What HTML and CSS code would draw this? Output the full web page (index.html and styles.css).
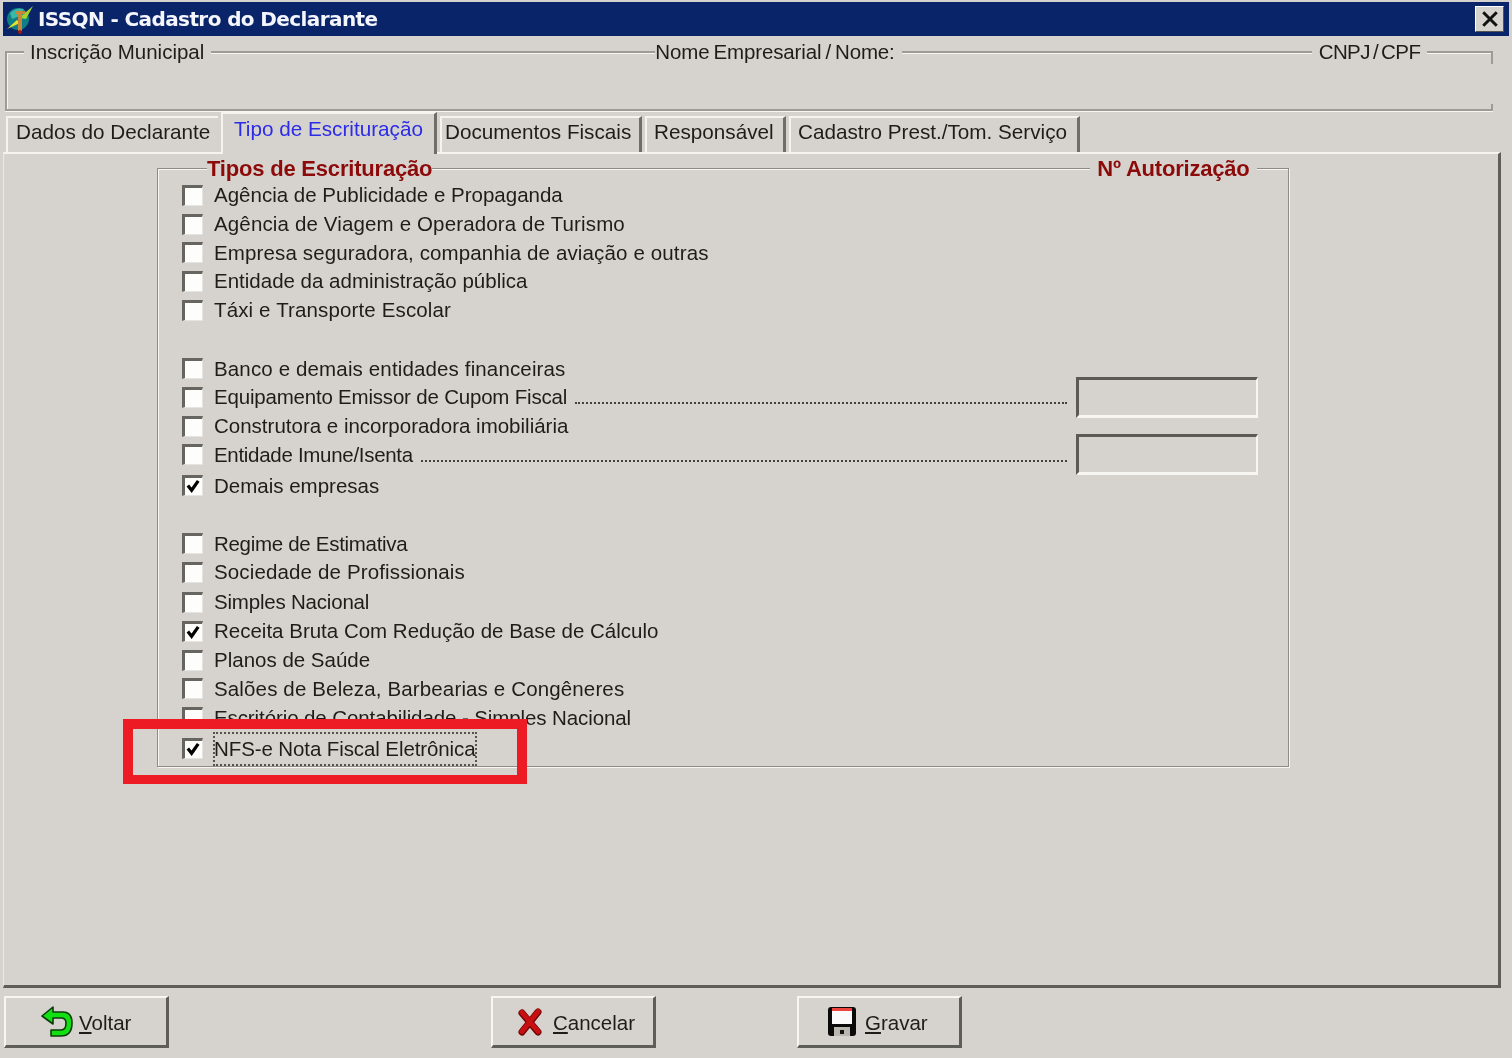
FILE: index.html
```html
<!DOCTYPE html>
<html lang="pt-BR">
<head>
<meta charset="utf-8">
<title>ISSQN - Cadastro do Declarante</title>
<link rel="stylesheet" href="styles.css">
</head>
<body>
<div class="window">
  <header class="titlebar">
    <svg class="app-icon" viewBox="0 0 30 30" aria-hidden="true">
      <circle cx="13" cy="15" r="11" fill="#0f7f86"/>
      <path d="M5 9q6-6 14-4l-4 7-8 3z" fill="#39b8a8"/>
      <path d="M2 25 12 16l3 3z" fill="#e6e22a"/>
      <path d="M14 14 28 2l-7 13z" fill="#9fd62a"/>
      <path d="M11 7h9v3h-3v17h-4V10h-2z" fill="#c8853c"/>
      <circle cx="15" cy="28" r="2" fill="#a01818"/>
    </svg>
    <span class="title-text">ISSQN - Cadastro do Declarante</span>
    <button class="close-btn" aria-label="Fechar">
      <svg viewBox="0 0 16 14" aria-hidden="true"><path d="M2 1 14 13M14 1 2 13" stroke="#111" stroke-width="2.6" fill="none"/></svg>
    </button>
  </header>

  <section class="head-group">
    <div class="legends">
      <span class="legend legend-insc">Inscrição Municipal</span>
      <span class="legend legend-nome">Nome Empresarial / Nome:</span>
      <span class="legend legend-cnpj">CNPJ / CPF</span>
    </div>
  </section>

  <nav class="tabs">
    <span class="tab tab-dados">Dados do Declarante</span>
    <span class="tab tab-active">Tipo de Escrituração</span>
    <span class="tab tab-docs">Documentos Fiscais</span>
    <span class="tab tab-resp">Responsável</span>
    <span class="tab tab-cad">Cadastro Prest./Tom. Serviço</span>
  </nav>

  <main class="panel">
    <section class="types-group">
      <div class="legends">
        <span class="legend red legend-tipos">Tipos de Escrituração</span>
        <span class="legend red legend-aut">Nº Autorização</span>
      </div>
      <div class="rows">
        <div class="row"><i class="check"></i><span class="label">Agência de Publicidade e Propaganda</span></div>
        <div class="row"><i class="check"></i><span class="label sp-wide">Agência de Viagem e Operadora de Turismo</span></div>
        <div class="row"><i class="check"></i><span class="label sp-wide">Empresa seguradora, companhia de aviação e outras</span></div>
        <div class="row"><i class="check"></i><span class="label">Entidade da administração pública</span></div>
        <div class="row"><i class="check"></i><span class="label sp-wide">Táxi e Transporte Escolar</span></div>
      </div>
      <div class="rows block-gap">
        <div class="row"><i class="check"></i><span class="label sp-wide">Banco e demais entidades financeiras</span></div>
        <div class="row"><i class="check"></i><span class="label sp-tight">Equipamento Emissor de Cupom Fiscal</span><span class="leader"></span><span class="sunken"></span></div>
        <div class="row"><i class="check"></i><span class="label">Construtora e incorporadora imobiliária</span></div>
        <div class="row"><i class="check"></i><span class="label sp-tighter">Entidade Imune/Isenta</span><span class="leader"></span><span class="sunken"></span></div>
        <div class="row nudge-2"><i class="check"><svg viewBox="0 0 18 18"><path d="M3 8l4 5 7-10" stroke="#000" stroke-width="3.400" fill="none"/></svg></i><span class="label">Demais empresas</span></div>
      </div>
      <div class="rows block-gap-b">
        <div class="row"><i class="check"></i><span class="label sp-tighter">Regime de Estimativa</span></div>
        <div class="row"><i class="check"></i><span class="label sp-wide">Sociedade de Profissionais</span></div>
        <div class="row nudge-1"><i class="check"></i><span class="label sp-tight">Simples Nacional</span></div>
        <div class="row"><i class="check"><svg viewBox="0 0 18 18"><path d="M3 8l4 5 7-10" stroke="#000" stroke-width="3.400" fill="none"/></svg></i><span class="label">Receita Bruta Com Redução de Base de Cálculo</span></div>
        <div class="row"><i class="check"></i><span class="label">Planos de Saúde</span></div>
        <div class="row"><i class="check"></i><span class="label sp-wide">Salões de Beleza, Barbearias e Congêneres</span></div>
        <div class="row"><i class="check"></i><span class="label sp-slight">Escritório de Contabilidade - Simples Nacional</span></div>
        <div class="row nudge-2"><i class="check"><svg viewBox="0 0 18 18"><path d="M3 8l4 5 7-10" stroke="#000" stroke-width="3.400" fill="none"/></svg></i><span class="label focused sp-slight">NFS-e Nota Fiscal Eletrônica</span></div>
      </div>
    </section>
  </main>

  <footer class="footer">
    <button class="btn btn-voltar">
      <svg class="ico" width="32" height="32" viewBox="0 0 32 32" aria-hidden="true">
        <path d="M1 10 12 1v5h10q9 0 9 11 0 13-11 13H10v-6h10q5 0 5-7 0-5-5-5h-8v6z" fill="#12e012" stroke="#0c3c0c" stroke-width="1.600" stroke-linejoin="round"/>
      </svg>
      <span class="btn-text"><u>V</u>oltar</span>
    </button>
    <button class="btn btn-cancelar">
      <svg class="ico" width="28" height="28" viewBox="0 0 28 28" aria-hidden="true">
        <path d="M6 5 22 24M22 4 6 24" stroke="#6e0608" stroke-width="7" stroke-linecap="round" fill="none"/>
        <path d="M6 4.500 22 23.500M22 3.500 6 23.500" stroke="#c80f12" stroke-width="5" stroke-linecap="round" fill="none"/>
      </svg>
      <span class="btn-text"><u>C</u>ancelar</span>
    </button>
    <button class="btn btn-gravar">
      <svg class="ico" width="30" height="31" viewBox="0 0 30 31" aria-hidden="true">
        <rect x="1" y="1" width="28" height="29" rx="3" fill="#0a0a0a"/>
        <rect x="5" y="2" width="20" height="3" fill="#f0443e"/>
        <rect x="5" y="5" width="20" height="13" fill="#fbfbfb"/>
        <rect x="7" y="21" width="16" height="9" fill="#b9b6b0"/>
        <rect x="13" y="24" width="4" height="4" fill="#111"/>
      </svg>
      <span class="btn-text"><u>G</u>ravar</span>
    </button>
  </footer>

  <div class="annotation"></div>
</div>
</body>
</html>
```

FILE: styles.css
```css
* { box-sizing: border-box; }
html, body { margin: 0; padding: 0; background: #d6d3ce; }
body { width: 1512px; height: 1058px; overflow: hidden; }

.window {
  position: relative;
  width: 1512px;
  height: 1058px;
  padding: 2px 0 0 3px;
  background: #d6d3ce;
  font-family: "Liberation Sans", Arial, sans-serif;
  font-size: 20.5px;
  color: #1f1d19;
  filter: blur(0.55px);
}

/* Title bar */
.titlebar {
  display: flex;
  align-items: center;
  width: 1506px;
  height: 34px;
  padding: 0 5px 0 2px;
  background: #0a246a;
  color: #fff;
}
.app-icon { width: 30px; height: 30px; flex: none; }
.title-text {
  margin-left: 3px;
  font-family: "DejaVu Sans", sans-serif;
  font-weight: 700;
  font-size: 20px;
  letter-spacing: -0.6px;
  color: #f4f6fb;
}
.close-btn {
  display: flex;
  align-items: center;
  justify-content: center;
  margin-left: auto;
  width: 29px;
  height: 26px;
  padding: 0;
  background: #d6d3ce;
  border: 1px solid;
  border-color: #fff #55534e #55534e #fff;
}
.close-btn svg { width: 18px; height: 16px; }

/* Legend rows lying on group frames */
.legends { display: flex; align-items: center; height: 0; }
.legend { background: #d6d3ce; line-height: 24px; white-space: nowrap; }
.red { color: #8c0a0a; font-weight: 700; font-size: 22px; letter-spacing: -0.2px; }

/* Header group */
.head-group {
  position: relative;
  width: 1488px;
  height: 60px;
  margin: 15px 0 0 2px;
  border: 2px solid #9e9b96;
  border-right: 0;
  box-shadow: inset 1px 1px 0 #f6f5f2, 0 1px 0 #f6f5f2;
}
.head-group::after {
  content: "";
  position: absolute;
  top: -2px;
  bottom: -2px;
  right: 0;
  width: 2px;
  background: linear-gradient(#9e9b96 0 13px, transparent 13px 53px, #9e9b96 53px);
}
.legends.legends { margin-top: -1px; }
.legend-insc { margin-left: 17px; padding: 0 7px 0 6px; }
.legend-nome { margin-left: 444px; padding: 0 7px 0 0; word-spacing: -1.5px; letter-spacing: -0.14px; }
.legend-cnpj { margin-left: 410px; padding: 0 7px; word-spacing: -2px; letter-spacing: -0.6px; }

/* Tabs */
.tabs {
  position: relative;
  z-index: 1;
  display: flex;
  align-items: flex-end;
  gap: 3px;
  height: 40px;
  margin: 1px 0 0 3px;
  font-size: 20.7px;
}
.tab {
  display: flex;
  align-items: center;
  height: 36px;
  padding-bottom: 6px;
  border-top: 2px solid #f4f3f0;
  border-left: 2px solid #f4f3f0;
  border-right: 3px solid #6f6d68;
  white-space: nowrap;
}
.tab-dados { width: 212px; padding-left: 8px; border-right: 0; }
.tab-active {
  width: 216px;
  height: 42px;
  margin-bottom: -2px;
  padding: 0 0 11px 11px;
  background: #d6d3ce;
  color: #2b2be8;
}
.tab-docs { width: 202px; padding-left: 3px; }
.tab-resp { width: 141px; padding-left: 7px; }
.tab-cad { width: 291px; padding-left: 7px; }

/* Main panel */
.panel {
  width: 1498px;
  height: 836px;
  padding: 14px 0 0 153px;
  border-top: 2px solid #f4f3f0;
  border-right: 3px solid #5f5d58;
  border-bottom: 3px solid #5f5d58;
  border-left: 1px solid #ebe9e5;
}

.types-group {
  width: 1132px;
  height: 599px;
  padding: 12px 30px 0 24px;
  border: 1px solid #8f8c87;
  box-shadow: inset 1px 1px 0 #f6f5f2, 1px 1px 0 #f6f5f2;
}
.types-group .legends { margin: -12px -30px 12px -24px; }
.legend-tipos { margin-left: 49px; }
.legend-aut { margin-left: 658px; padding: 0 7px; }

.rows { display: flex; flex-direction: column; }
.block-gap { margin-top: 30px; }
.block-gap-b { margin-top: 29.2px; }
.block-gap-b .row { height: 28.9px; }
.row {
  display: flex;
  align-items: center;
  flex: none;
  height: 28.7px;
}
.nudge-1 { margin-top: 1px; }
.nudge-2 { margin-top: 2px; }

.check {
  flex: none;
  display: block;
  width: 21px;
  height: 21px;
  margin-right: 10px;
  background: #fdfdfc;
  border-top: 3px solid #676560;
  border-left: 3px solid #676560;
  border-right: 1px solid #e6e4e0;
  border-bottom: 1px solid #e6e4e0;
}
.check svg { display: block; width: 17px; height: 17px; }

.label { white-space: nowrap; margin-left: 1px; }
.sp-wide { letter-spacing: 0.14px; }
.sp-slight { letter-spacing: -0.1px; }
.sp-tight { letter-spacing: -0.2px; }
.sp-tighter { letter-spacing: -0.3px; }
.leader {
  flex: 1;
  height: 0;
  margin: 12px 9px 0 8px;
  border-bottom: 2px dotted #44423e;
}
.sunken {
  flex: none;
  width: 182px;
  height: 41px;
  border-top: 3px solid #5c5a55;
  border-left: 3px solid #5c5a55;
  border-right: 2px solid #f7f6f3;
  border-bottom: 3px solid #f7f6f3;
}
.focused {
  display: flex;
  align-items: center;
  height: 32px;
  outline: 2px dotted #55534e;
  outline-offset: -1px;
}

/* Footer */
.footer { display: flex; margin: 8px 0 0 1px; }
.btn {
  display: flex;
  align-items: center;
  justify-content: flex-start;
  width: 165px;
  height: 52px;
  background: #d6d3ce;
  font: inherit;
  color: inherit;
  border-top: 2px solid #f7f6f3;
  border-left: 2px solid #f7f6f3;
  border-right: 3px solid #5f5d58;
  border-bottom: 3px solid #5f5d58;
}
.btn u { text-underline-offset: 2px; }
.btn-text { margin-top: 2px; }
.ico { flex: none; }
.btn-voltar { padding: 0 0 0 35px; gap: 6px; }
.btn-cancelar { margin-left: 322px; padding: 0 0 0 23px; gap: 9px; }
.btn-gravar { margin-left: 141px; padding: 0 0 0 28px; gap: 8px; }

/* Red highlight drawn over the screenshot */
.annotation {
  position: absolute;
  left: 123px;
  top: 719px;
  width: 404px;
  height: 65px;
  border: 10px solid #ed1c24;
  border-bottom-width: 9px;
}
```
